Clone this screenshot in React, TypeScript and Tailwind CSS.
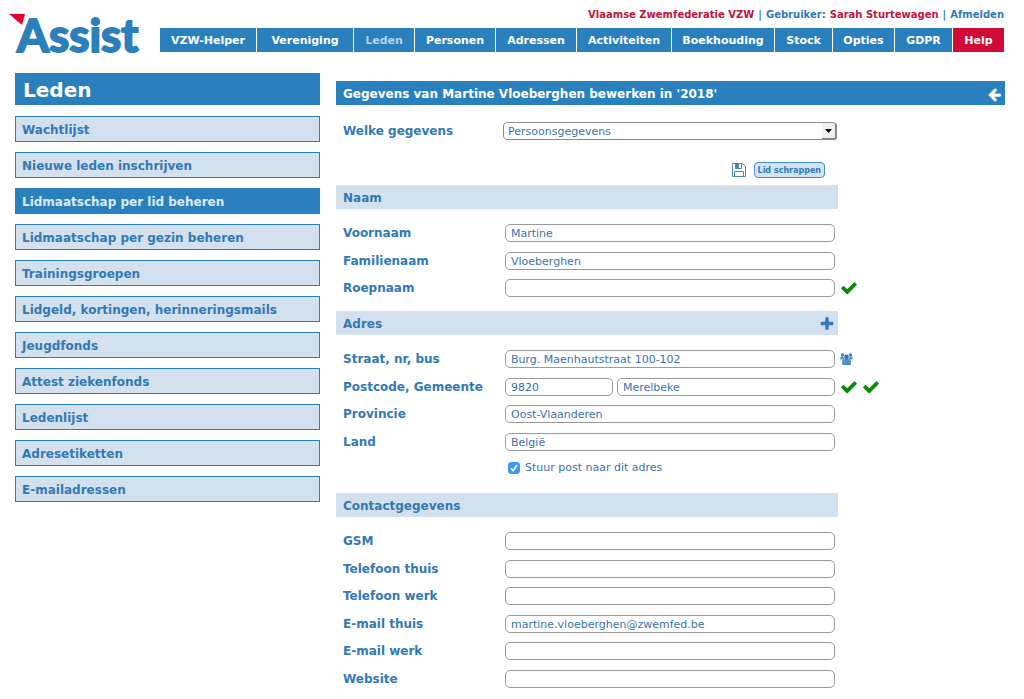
import type { ReactNode } from "react";

const navItems = [
  "VZW-Helper",
  "Vereniging",
  "Leden",
  "Personen",
  "Adressen",
  "Activiteiten",
  "Boekhouding",
  "Stock",
  "Opties",
  "GDPR",
  "Help",
];

const sideItems = [
  "Wachtlijst",
  "Nieuwe leden inschrijven",
  "Lidmaatschap per lid beheren",
  "Lidmaatschap per gezin beheren",
  "Trainingsgroepen",
  "Lidgeld, kortingen, herinneringsmails",
  "Jeugdfonds",
  "Attest ziekenfonds",
  "Ledenlijst",
  "Adresetiketten",
  "E-mailadressen",
];

const contactFields = [
  { id: "gsm", label: "GSM", value: "" },
  { id: "tel-thuis", label: "Telefoon thuis", value: "" },
  { id: "tel-werk", label: "Telefoon werk", value: "" },
  { id: "mail-thuis", label: "E-mail thuis", value: "martine.vloeberghen@zwemfed.be" },
  { id: "mail-werk", label: "E-mail werk", value: "" },
  { id: "website", label: "Website", value: "" },
];

const inputClass =
  "block h-[18px] min-w-0 rounded-[5px] border border-[#9a9a9a] bg-white px-[5px] pt-px text-[11px] leading-4 text-[#3a73a8] outline-none";

function Logo() {
  return (
    <svg width="144" height="64" viewBox="0 0 144 64" role="img" aria-label="Assist">
      <path d="M1 14 L17 14 L14 25 Z" fill="#e4032e" />
      <text
        x="9"
        y="52"
        fill="#2b80bc"
        stroke="#2b80bc"
        strokeWidth="2"
        fontFamily="Lato, sans-serif"
        fontWeight="700"
        fontSize="46"
      >
        Assist
      </text>
    </svg>
  );
}

function ArrowLeftIcon() {
  return (
    <svg width="15" height="15" viewBox="0 0 1792 1792" fill="currentColor">
      <path d="M1664 896v128q0 53-32.5 90.5t-84.5 37.5h-704l293 294q38 36 38 90t-38 90l-75 76q-37 37-90 37-52 0-91-37l-651-652q-37-37-37-90 0-52 37-91l651-650q38-38 91-38 52 0 90 38l75 74q38 38 38 91t-38 91l-293 293h704q52 0 84.5 37.5t32.5 90.5z" />
    </svg>
  );
}

function PlusIcon() {
  return (
    <svg width="16" height="16" viewBox="0 0 1792 1792" fill="currentColor">
      <path d="M1600 736v192q0 40-28 68t-68 28h-416v416q0 40-28 68t-68 28h-192q-40 0-68-28t-28-68v-416h-416q-40 0-68-28t-28-68v-192q0-40 28-68t68-28h416v-416q0-40 28-68t68-28h192q40 0 68 28t28 68v416h416q40 0 68 28t28 68z" />
    </svg>
  );
}

function UsersIcon() {
  return (
    <svg width="13" height="12" viewBox="0 0 13 12">
      <g fill="#4f95d2">
        <path d="M0.3 6.5 V5 Q0.3 3.4 1.6 3.6 H3.4 L4.2 6.5 Z" />
        <path d="M12.7 6.5 V5 Q12.7 3.4 11.4 3.6 H9.6 L8.8 6.5 Z" />
        <path d="M2 10.4 Q2 6 4 6 H9 Q11 6 11 10.4 Q11 11.8 9.6 11.8 H3.4 Q2 11.8 2 10.4 Z" />
      </g>
      <g fill="#3379b8">
        <circle cx="2.5" cy="1.8" r="1.6" />
        <circle cx="10.5" cy="1.8" r="1.6" />
        <circle cx="6.5" cy="4" r="2.4" />
      </g>
      <path d="M2.6 11.3 H10.4" stroke="#3379b8" />
    </svg>
  );
}

function SaveIcon() {
  return (
    <svg width="14" height="14" viewBox="0 0 14 14" fill="none" stroke="#4a86b8">
      <path d="M0.5 0.5 H10.5 L13.5 3.5 V13.5 H0.5 Z" />
      <path d="M3.5 0.5 V5.5 H9.5 V0.5" />
      <path d="M4.5 1 V5 H6.5 V1" fill="#4a86b8" />
      <path d="M2.5 13.5 V8.5 H11.5 V13.5" />
    </svg>
  );
}

function Check({ label }: { label: string }) {
  return (
    <button type="button" aria-label={label} className="text-[#0b8a0b]">
      <svg width="18" height="18" viewBox="0 0 1792 1792" fill="currentColor">
        <path d="M1671 566q0 40-28 68l-724 724-136 136q-28 28-68 28t-68-28l-136-136-362-362q-28-28-28-68t28-68l136-136q28-28 68-28t68 28l294 295 656-657q28-28 68-28t68 28l136 136q28 28 28 68z" />
      </svg>
    </button>
  );
}

function SectionTitle({ title, children }: { title: string; children?: ReactNode }) {
  return (
    <div className="flex h-6 items-center justify-between bg-[#d3e0ee] px-[7px] pt-px">
      <h3 className="text-xs font-bold">{title}</h3>
      {children}
    </div>
  );
}

function Row({ id, label, children }: { id: string; label: string; children: ReactNode }) {
  return (
    <div className="flex items-start odd:h-7 even:h-[27px]">
      <label htmlFor={id} className="w-[169px] shrink-0 pl-[7px] text-xs leading-[18px] font-bold">
        {label}
      </label>
      {children}
    </div>
  );
}

export default function App() {
  return (
    <div className="min-h-screen bg-white pr-[19px] pb-2 font-['DejaVu_Sans',sans-serif] text-[#3279b3]">
      <header className="flex pr-px pl-2">
        <a href="#" className="w-[152px] shrink-0">
          <Logo />
        </a>
        <div className="min-w-0 flex-1 pt-2">
          <div className="flex justify-end gap-1 text-[10px] leading-[14px] font-bold whitespace-nowrap">
            <span className="text-[#c0143c]">Vlaamse Zwemfederatie VZW</span>
            <span>|</span>
            <span>Gebruiker:</span>
            <span className="text-[#c0143c]">Sarah Sturtewagen</span>
            <span>|</span>
            <a href="#">Afmelden</a>
          </div>
          <nav className="mt-[6px] grid grid-cols-[96fr_96fr_60fr_80fr_80fr_94fr_102fr_57fr_61fr_57fr_51fr] gap-px">
            {navItems.map((item) => (
              <a
                key={item}
                href="#"
                className={`flex h-6 items-center justify-center pt-[2px] text-[11px] font-bold ${
                  item === "Help" ? "bg-[#d20a36]" : "bg-[#2980bc]"
                } ${item === "Leden" ? "text-[#b5d3ec]" : "text-white"}`}
              >
                {item}
              </a>
            ))}
          </nav>
        </div>
      </header>

      <div className="mt-[9px] flex items-start gap-4 pl-[15px]">
        <aside className="w-[305px] shrink-0">
          <h1 className="flex h-8 items-center bg-[#2980bc] px-2 pt-[2px] text-xl font-bold text-white">
            Leden
          </h1>
          <ul className="mt-[11px] space-y-[10px]">
            {sideItems.map((item, index) => (
              <li key={item}>
                <a
                  href="#"
                  className={`flex h-[26px] items-center border border-[#2980bc] px-[6px] pt-[2px] text-xs font-bold ${
                    index === 2 ? "bg-[#2980bc] text-[#dceafa]" : "bg-[#d3e0ee]"
                  }`}
                >
                  {item}
                </a>
              </li>
            ))}
          </ul>
        </aside>

        <main className="min-w-0 flex-1 pt-2">
          <div className="flex h-6 items-center justify-between bg-[#2980bc] px-[7px] pt-[2px] text-white">
            <h2 className="text-xs font-bold">Gegevens van Martine Vloeberghen bewerken in '2018'</h2>
            <button type="button" aria-label="Terug" className="-mr-1">
              <ArrowLeftIcon />
            </button>
          </div>

          <form className="max-w-[502px]">
            <div className="mt-[17px] flex">
              <label htmlFor="welke" className="w-[167px] shrink-0 pl-[7px] text-xs leading-[18px] font-bold">
                Welke gegevens
              </label>
              <div className="relative mr-px min-w-0 flex-1">
                <select
                  id="welke"
                  className="block h-[18px] w-full appearance-none rounded-[4px] border border-[#8c8c8c] bg-white pt-px pl-1 text-[11px] leading-4 text-[#3a73a8] outline-none"
                >
                  <option>Persoonsgegevens</option>
                </select>
                <span className="pointer-events-none absolute top-px right-0 flex h-[17px] w-[15px] items-center justify-center rounded-r-[3px] border-r-2 border-b-2 border-[#858585] bg-[#f0f0f0]">
                  <svg width="7" height="4" viewBox="0 0 7 4">
                    <path d="M0 0 H7 L3.5 4 Z" fill="#000" />
                  </svg>
                </span>
              </div>
            </div>

            <div className="mt-[22px] mb-[7px] flex h-4 items-center justify-end gap-2 pr-[13px]">
              <button type="button" aria-label="Bewaren">
                <SaveIcon />
              </button>
              <button
                type="button"
                className="h-4 rounded-[4px] border border-[#4a8cc4] bg-[#d3e3f5] px-[3px] pt-px text-[8px] leading-[14px] font-bold whitespace-nowrap"
              >
                Lid schrappen
              </button>
            </div>

            <section>
              <SectionTitle title="Naam" />
              <div className="pt-[15px]">
                <Row id="voornaam" label="Voornaam">
                  <input id="voornaam" defaultValue="Martine" className={`${inputClass} w-[330px]`} />
                </Row>
                <Row id="familienaam" label="Familienaam">
                  <input id="familienaam" defaultValue="Vloeberghen" className={`${inputClass} w-[330px]`} />
                </Row>
                <Row id="roepnaam" label="Roepnaam">
                  <input id="roepnaam" className={`${inputClass} w-[330px] shrink-0`} />
                  <span className="ml-[5px] flex h-[18px] items-center">
                    <Check label="Roepnaam bevestigen" />
                  </span>
                </Row>
              </div>
            </section>

            <section className="mt-1">
              <SectionTitle title="Adres">
                <button type="button" aria-label="Adres toevoegen" className="-mr-1">
                  <PlusIcon />
                </button>
              </SectionTitle>
              <div className="pt-[15px]">
                <Row id="straat" label="Straat, nr, bus">
                  <input
                    id="straat"
                    defaultValue="Burg. Maenhautstraat 100-102"
                    className={`${inputClass} w-[330px] shrink-0`}
                  />
                  <button type="button" aria-label="Gezin" className="ml-[5px] flex h-[18px] items-center">
                    <UsersIcon />
                  </button>
                </Row>
                <Row id="postcode" label="Postcode, Gemeente">
                  <input id="postcode" defaultValue="9820" className={`${inputClass} w-[108px] shrink-0`} />
                  <input
                    aria-label="Gemeente"
                    defaultValue="Merelbeke"
                    className={`${inputClass} ml-1 w-[218px] shrink-0`}
                  />
                  <span className="ml-[5px] flex h-[18px] items-center gap-1">
                    <Check label="Postcode bevestigen" />
                    <Check label="Gemeente bevestigen" />
                  </span>
                </Row>
                <Row id="provincie" label="Provincie">
                  <input id="provincie" defaultValue="Oost-Vlaanderen" className={`${inputClass} w-[330px]`} />
                </Row>
                <Row id="land" label="Land">
                  <input id="land" defaultValue="België" className={`${inputClass} w-[330px]`} />
                </Row>
              </div>
              <label className="ml-[172px] flex h-4 items-center gap-[5px] text-[11px] text-[#3a73a8]">
                <span className="relative size-3">
                  <input
                    type="checkbox"
                    defaultChecked
                    className="peer block size-3 appearance-none rounded-[3px] border border-[#9a9a9a] checked:border-[#3b99fc] checked:bg-[#3b99fc]"
                  />
                  <svg
                    viewBox="0 0 12 12"
                    className="pointer-events-none absolute inset-0 hidden peer-checked:block"
                    fill="none"
                    stroke="#fff"
                    strokeWidth="1.6"
                  >
                    <path d="M3 6.2 L5.2 8.6 L9 3" />
                  </svg>
                </span>
                Stuur post naar dit adres
              </label>
            </section>

            <section className="mt-[17px]">
              <SectionTitle title="Contactgegevens" />
              <div className="pt-[15px]">
                {contactFields.map((field) => (
                  <Row key={field.id} id={field.id} label={field.label}>
                    <input id={field.id} defaultValue={field.value} className={`${inputClass} w-[330px]`} />
                  </Row>
                ))}
              </div>
            </section>
          </form>
        </main>
      </div>
    </div>
  );
}
